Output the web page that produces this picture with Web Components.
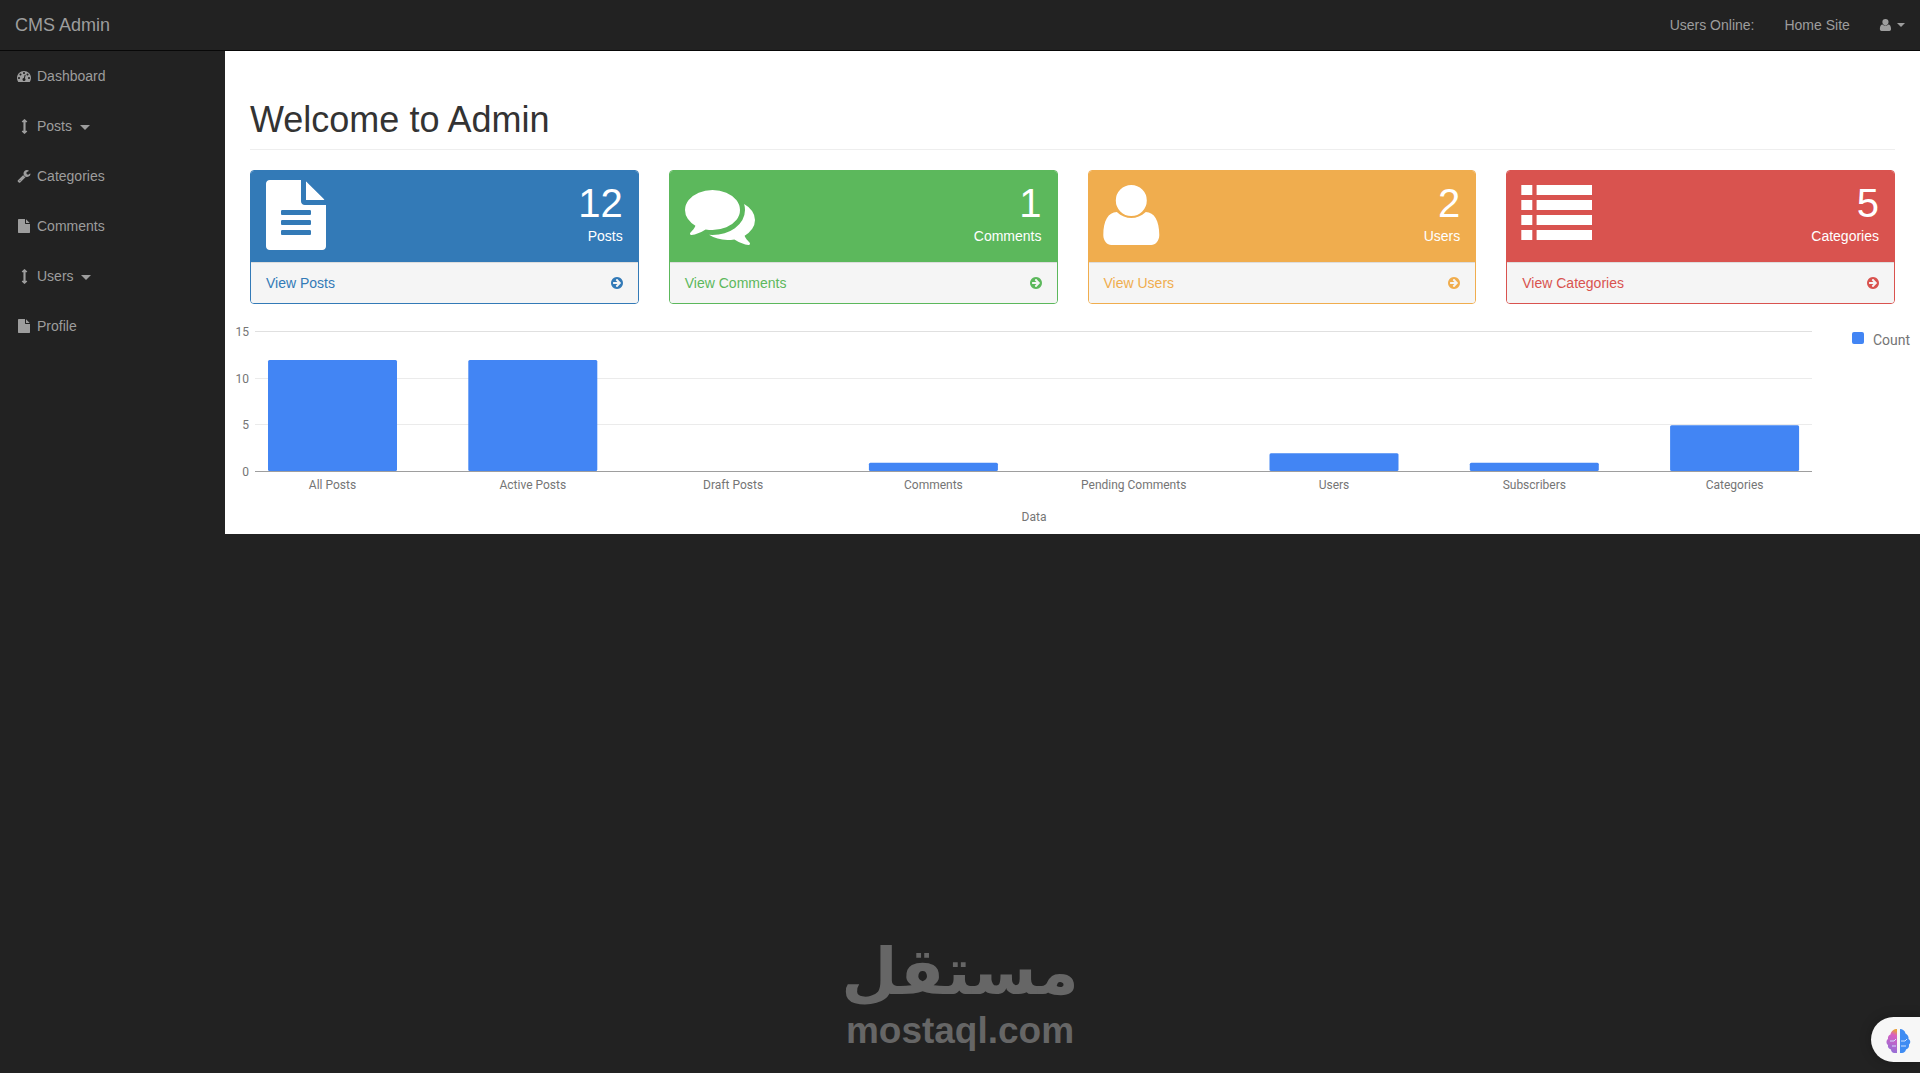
<!DOCTYPE html>
<html lang="en">
<head>
<meta charset="utf-8">
<title>CMS Admin</title>
<style>
  html, body { margin: 0; padding: 0; background: #222; min-height: 100%; }
  body { font-family: "Liberation Sans", Arial, sans-serif; font-size: 14px; line-height: 20px; color: #333; }
</style>
</head>
<body>
<cms-admin></cms-admin>
<mostaql-mark></mostaql-mark>
<brain-widget></brain-widget>

<script>
const ICONS = {
  dashboard: ['0 0 1792 1792', 'M384 1152q0-53-37.5-90.5t-90.5-37.5-90.5 37.5-37.5 90.5 37.5 90.5 90.5 37.5 90.5-37.5 37.5-90.5zm192-448q0-53-37.5-90.5t-90.5-37.5-90.5 37.5-37.5 90.5 37.5 90.5 90.5 37.5 90.5-37.5 37.5-90.5zm428 481l101-382q6-26-7.5-48.5t-38.5-29.5-48 6.5-30 39.5l-101 382q-60 5-107 43.5t-63 98.5q-20 77 20 146t117 89 146-20 89-117q16-60-6-117t-72-91zm660-33q0-53-37.5-90.5t-90.5-37.5-90.5 37.5-37.5 90.5 37.5 90.5 90.5 37.5 90.5-37.5 37.5-90.5zm-640-640q0-53-37.5-90.5t-90.5-37.5-90.5 37.5-37.5 90.5 37.5 90.5 90.5 37.5 90.5-37.5 37.5-90.5zm448 192q0-53-37.5-90.5t-90.5-37.5-90.5 37.5-37.5 90.5 37.5 90.5 90.5 37.5 90.5-37.5 37.5-90.5zm320 448q0 261-141 483-19 29-54 29h-1402q-35 0-54-29-141-221-141-483 0-182 71-348t191-286 286-191 348-71 348 71 286 191 191 286 71 348z'],
  arrows: ['0 0 1792 1792', 'M1216 320q0 26-19 45t-45 19h-128v1024h128q26 0 45 19t19 45-19 45l-256 256q-19 19-45 19t-45-19l-256-256q-19-19-19-45t19-45 45-19h128v-1024h-128q-26 0-45-19t-19-45 19-45l256-256q19-19 45-19t45 19l256 256q19 19 19 45z'],
  wrench: ['0 0 1792 1792', 'M448 1472q0-26-19-45t-45-19-45 19-19 45 19 45 45 19 45-19 19-45zm644-420l-682 682q-37 37-90 37-52 0-91-37l-106-108q-38-36-38-90 0-53 38-91l681-681q39 98 114.5 173.5t173.5 114.5zm634-435q0 39-23 106-47 134-164.5 217.5t-258.5 83.5q-185 0-316.5-131.5t-131.5-316.5 131.5-316.5 316.5-131.5q58 0 121.5 16.5t107.5 46.5q16 11 16 28t-16 28l-293 169v224l193 107q5-3 79-48.5t135.5-81 70.5-35.5q15 0 23.5 10t8.5 25z'],
  file: ['0 0 1792 1792', 'M1152 512v-472q22 14 36 28l408 408q14 14 28 36h-472zm-128 32q0 40 28 68t68 28h544v1056q0 40-28 68t-68 28h-1344q-40 0-68-28t-28-68v-1600q0-40 28-68t68-28h800v544z'],
  filetext: ['128 0 1536 1792', 'M1596 476q14 14 28 36h-472v-472q22 14 36 28zm-476 164h544v1056q0 40-28 68t-68 28h-1344q-40 0-68-28t-28-68v-1600q0-40 28-68t68-28h800v544q0 40 28 68t68 28zm160 736v-64q0-14-9-23t-23-9h-704q-14 0-23 9t-9 23v64q0 14 9 23t23 9h704q14 0 23-9t9-23zm0-256v-64q0-14-9-23t-23-9h-704q-14 0-23 9t-9 23v64q0 14 9 23t23 9h704q14 0 23-9t9-23zm0-256v-64q0-14-9-23t-23-9h-704q-14 0-23 9t-9 23v64q0 14 9 23t23 9h704q14 0 23-9t9-23z'],
  comments: ['0 0 1792 1792', 'M1408 768q0 139-94 257t-256.5 186.5-353.5 68.5q-86 0-176-16-124 88-278 128-36 9-86 16h-3q-11 0-20.5-8t-11.5-21q-1-3-1-6.5t.5-6.5 2-6l2.5-5 3.5-5.5 4-5 4.5-5 4-4.5q5-6 23-25t26-29.5 22.5-29 25-38.5 20.5-44q-124-72-195-177t-71-224q0-139 94-257t256.5-186.5 353.5-68.5 353.5 68.5 256.5 186.5 94 257zm384 256q0 120-71 224.5t-195 176.5q10 24 20.5 44t25 38.5 22.5 29 26 29.5 23 25q1 1 4 4.5t4.5 5 4 5 3.5 5.5l2.5 5 2 6 .5 6.5-1 6.5q-3 14-13 22t-22 7q-50-7-86-16-154-40-278-128-90 16-176 16-271 0-472-132 58 4 88 4 161 0 309-45t264-129q125-92 192-212t67-254q0-77-23-152 129 71 204 178t75 230z'],
  user: ['0.7 0 56 70', 'M28 5a15.5 15.5 0 1 1 0 31a15.5 15.5 0 1 1 0-31zM13.5 32C18 36 23 38 28 38C33 38 38 36 42.500 32C51 32 56 41 56 55C56 61 52 65 48 65H8C4 65 0 61 0 55C0 41 5 32 13.500 32z'],
  list: ['0.7 0 71 70', 'M0 5h11v10H0zM15.300 5h55.400v10H15.300zM0 20h11v10H0zM15.300 20h55.400v10H15.300zM0 35h11v10H0zM15.300 35h55.400v10H15.300zM0 50h11v10H0zM15.300 50h55.400v10H15.300z'],
  arrowright: ['128 128 1536 1536', 'M1413 896q0-27-18-45l-91-91-362-362q-18-18-45-18t-45 18l-91 91q-18 18-18 45t18 45l189 189h-502q-26 0-45 19t-19 45v128q0 26 19 45t45 19h502l-189 189q-19 19-19 45t19 45l91 91q18 18 45 18t45-18l362-362 91-91q18-18 18-45zm251 0q0 209-103 385.5t-279.5 279.5-385.5 103-385.5-103-279.5-279.5-103-385.5 103-385.5 279.5-279.5 385.5-103 385.5 103 279.5 279.5 103 385.5z']
};

class FaIcon extends HTMLElement {
  connectedCallback() {
    const [box, d] = ICONS[this.getAttribute('name')];
    const size = this.getAttribute('size') || 14;
    const [, , w, h] = box.split(' ').map(Number);
    this.attachShadow({ mode: 'open' }).innerHTML = `
      <style>
        :host { display: inline-flex; align-items: center; justify-content: center; flex: none; line-height: 0; }
        svg { display: block; fill: currentColor; overflow: visible; }
      </style>
      <svg viewBox="${box}" width="${size * w / h}" height="${size}"><path d="${d}"/></svg>
    `;
  }
}

class CmsNavbar extends HTMLElement {
  constructor() {
    super();
    this.attachShadow({ mode: 'open' }).innerHTML = `
      <style>
        :host { display: flex; justify-content: space-between; height: 50px; background: #222; border-bottom: 1px solid #080808; color: #9d9d9d; }
        .brand { font-size: 18px; line-height: 20px; padding: 15px; }
        .right { display: flex; }
        .item { padding: 15px; display: flex; align-items: center; gap: 6px; }
        .caret { width: 0; height: 0; border-top: 4px solid; border-left: 4px solid transparent; border-right: 4px solid transparent; }
      </style>
      <div class="brand">CMS Admin</div>
      <div class="right">
        <div class="item">Users Online:</div>
        <div class="item">Home Site</div>
        <div class="item"><fa-icon name="user" size="14"></fa-icon><span class="caret"></span></div>
      </div>
    `;
  }
}

class SideLink extends HTMLElement {
  constructor() {
    super();
    this.attachShadow({ mode: 'open' }).innerHTML = `
      <style>
        :host { display: flex; align-items: center; height: 20px; padding: 15px; color: #9d9d9d; }
        .ico { width: 18px; margin-right: 4px; display: flex; justify-content: center; }
        .caret { display: none; width: 0; height: 0; margin-left: 7.5px; margin-top: 2px; border-top: 5px solid; border-left: 5px solid transparent; border-right: 5px solid transparent; }
        :host([dropdown]) .caret { display: block; }
      </style>
      <span class="ico"><slot name="icon"></slot></span>
      <slot></slot>
      <span class="caret"></span>
    `;
  }
}

class CmsSidebar extends HTMLElement {
  constructor() {
    super();
    this.attachShadow({ mode: 'open' }).innerHTML = `
      <style>
        :host { display: block; width: 225px; flex: none; background: #222; }
      </style>
      <side-link><fa-icon slot="icon" name="dashboard"></fa-icon>Dashboard</side-link>
      <side-link dropdown><fa-icon slot="icon" name="arrows" size="15"></fa-icon>Posts</side-link>
      <side-link><fa-icon slot="icon" name="wrench"></fa-icon>Categories</side-link>
      <side-link><fa-icon slot="icon" name="file"></fa-icon>Comments</side-link>
      <side-link dropdown><fa-icon slot="icon" name="arrows" size="15"></fa-icon>Users</side-link>
      <side-link><fa-icon slot="icon" name="file"></fa-icon>Profile</side-link>
    `;
  }
}

class StatPanel extends HTMLElement {
  connectedCallback() {
    const color = this.getAttribute('color');
    this.attachShadow({ mode: 'open' }).innerHTML = `
      <style>
        :host { display: block; background: #fff; border: 1px solid ${color}; border-radius: 4px; overflow: hidden; }
        .head { display: flex; justify-content: space-between; height: 71px; padding: 10px 15px; background: ${color}; color: #fff; }
        .ico { height: 70px; margin-top: -1px; }
        .nums { text-align: right; }
        .huge { font-size: 40px; line-height: 44px; padding-bottom: 1px; }
        .foot { display: flex; justify-content: space-between; align-items: center; height: 20px; padding: 10px 15px; background: #f5f5f5; border-top: 1px solid #ddd; color: ${color}; }
      </style>
      <div class="head">
        <div class="ico"><slot name="icon"></slot></div>
        <div class="nums">
          <div class="huge">${this.getAttribute('count')}</div>
          <div><slot></slot></div>
        </div>
      </div>
      <div class="foot">
        <span>${this.getAttribute('link')}</span>
        <fa-icon name="arrowright" size="12"></fa-icon>
      </div>
    `;
  }
}

class BarChart extends HTMLElement {
  constructor() {
    super();
    const data = [
      ['All Posts', 12], ['Active Posts', 12], ['Draft Posts', 0], ['Comments', 1],
      ['Pending Comments', 0], ['Users', 2], ['Subscribers', 1], ['Categories', 5]
    ];
    const left = 30, right = 1587, base = 148, unit = 9.333, barW = 129, step = 200.3;
    let grid = '', bars = '', labels = '';
    [[15, '#e0e0e0'], [10, '#ebebeb'], [5, '#ebebeb']].forEach(([v, c]) => {
      const y = base - v * unit;
      grid += `<rect x="${left}" y="${Math.round(y) - 1}" width="${right - left}" height="1" fill="${c}"/>`;
    });
    [0, 5, 10, 15].forEach((v) => {
      labels += `<text x="${left - 6}" y="${base - v * unit + 4}" text-anchor="end">${v}</text>`;
    });
    data.forEach(([name, v], i) => {
      const x = 43 + i * step;
      if (v) bars += `<rect x="${x}" y="${base - v * unit}" width="${barW}" height="${v * unit - 1}" rx="1.5" fill="#4285f4"/>`;
      labels += `<text x="${x + barW / 2}" y="165" text-anchor="middle">${name}</text>`;
    });
    this.attachShadow({ mode: 'open' }).innerHTML = `
      <style>
        :host { display: block; height: 210px; }
        svg { display: block; font-family: Roboto, sans-serif; font-size: 12px; fill: #757575; }
      </style>
      <svg width="1695" height="210" viewBox="0 0 1695 210">
        ${grid}${bars}
        <rect x="${left}" y="${base - 1}" width="${right - left}" height="1" fill="#9e9e9e"/>
        ${labels}
        <text x="809" y="197" text-anchor="middle">Data</text>
        <rect x="1627" y="8" width="12" height="12" rx="2" fill="#4285f4"/>
        <text x="1648" y="21" style="font-size:14px">Count</text>
      </svg>
    `;
  }
}

class CmsAdmin extends HTMLElement {
  constructor() {
    super();
    this.attachShadow({ mode: 'open' }).innerHTML = `
      <style>
        :host { display: block; }
        .body { display: flex; align-items: flex-start; }
        .page { flex: 1; background: #fff; }
        .top { padding: 0 25px; }
        h1 { margin: 0 0 20px; padding: 49px 0 9px; font-size: 36px; font-weight: 400; line-height: 40px; color: #333; border-bottom: 1px solid #eee; }
        .panels { display: grid; grid-template-columns: repeat(4, 1fr); gap: 30px; margin-bottom: 20px; }
      </style>
      <cms-navbar></cms-navbar>
      <div class="body">
        <cms-sidebar></cms-sidebar>
        <main class="page">
          <div class="top">
            <h1>Welcome to Admin</h1>
            <div class="panels">
              <stat-panel color="#337ab7" count="12" link="View Posts"><fa-icon slot="icon" name="filetext" size="70"></fa-icon>Posts</stat-panel>
              <stat-panel color="#5cb85c" count="1" link="View Comments"><fa-icon slot="icon" name="comments" size="70"></fa-icon>Comments</stat-panel>
              <stat-panel color="#f0ad4e" count="2" link="View Users"><fa-icon slot="icon" name="user" size="70"></fa-icon>Users</stat-panel>
              <stat-panel color="#d9534f" count="5" link="View Categories"><fa-icon slot="icon" name="list" size="70"></fa-icon>Categories</stat-panel>
            </div>
          </div>
          <bar-chart></bar-chart>
        </main>
      </div>
    `;
  }
}

// watermark laid over the page
class MostaqlMark extends HTMLElement {
  constructor() {
    super();
    this.attachShadow({ mode: 'open' }).innerHTML = `
      <style>
        :host { position: absolute; left: 780px; top: 942px; width: 360px; text-align: center; color: #666; font-weight: 700; }
        .ar { font-family: "DejaVu Sans", sans-serif; font-size: 65px; line-height: 60px; height: 69px; direction: rtl; }
        .en { font-family: "Liberation Sans", sans-serif; font-size: 37px; line-height: 40px; }
      </style>
      <div class="ar">مستقل</div>
      <div class="en">mostaql.com</div>
    `;
  }
}

class BrainWidget extends HTMLElement {
  constructor() {
    super();
    this.attachShadow({ mode: 'open' }).innerHTML = `
      <style>
        :host { position: absolute; left: 1871px; top: 1017px; width: 49px; height: 45px; background: #f7f7f7; border-radius: 23px 0 0 23px; box-shadow: 0 0 12px rgba(0,0,0,.25); }
        svg { position: absolute; left: 15px; top: 12px; }
      </style>
      <svg width="25" height="24" viewBox="0 0 25 24">
        <defs>
          <linearGradient id="lobe" x1="0.6" y1="0" x2="0.4" y2="1">
            <stop offset="0" stop-color="#e8a13c"/><stop offset=".22" stop-color="#d95fc0"/><stop offset="1" stop-color="#8f6fd8"/>
          </linearGradient>
        </defs>
        <path fill="url(#lobe)" d="M11 0v24H8.500C6 24 5 22 5 20.500C2.500 20 1.500 18 2 16C0 15 0 11 2 10C1.500 7.500 3 6 4.500 5.500C5 2 8 0 11 0z"/>
        <path fill="#3f8cf3" d="M14 0c2.500 0 5 1.500 5.500 4.500C21.500 5.500 23 7.500 22.500 10C24.500 11 25 14 23 15.500C23.500 18 22 20 20 20.500C19.500 22.500 18 24 16 24H14z"/>
        <path fill="none" stroke="#cfe0ff" stroke-width="1" d="M4 12h4l2-2M15 12h4l2-2M6 17h4M15 17h5"/>
      </svg>
    `;
  }
}

customElements.define('fa-icon', FaIcon);
customElements.define('cms-navbar', CmsNavbar);
customElements.define('side-link', SideLink);
customElements.define('cms-sidebar', CmsSidebar);
customElements.define('stat-panel', StatPanel);
customElements.define('bar-chart', BarChart);
customElements.define('cms-admin', CmsAdmin);
customElements.define('mostaql-mark', MostaqlMark);
customElements.define('brain-widget', BrainWidget);
</script>
</body>
</html>
